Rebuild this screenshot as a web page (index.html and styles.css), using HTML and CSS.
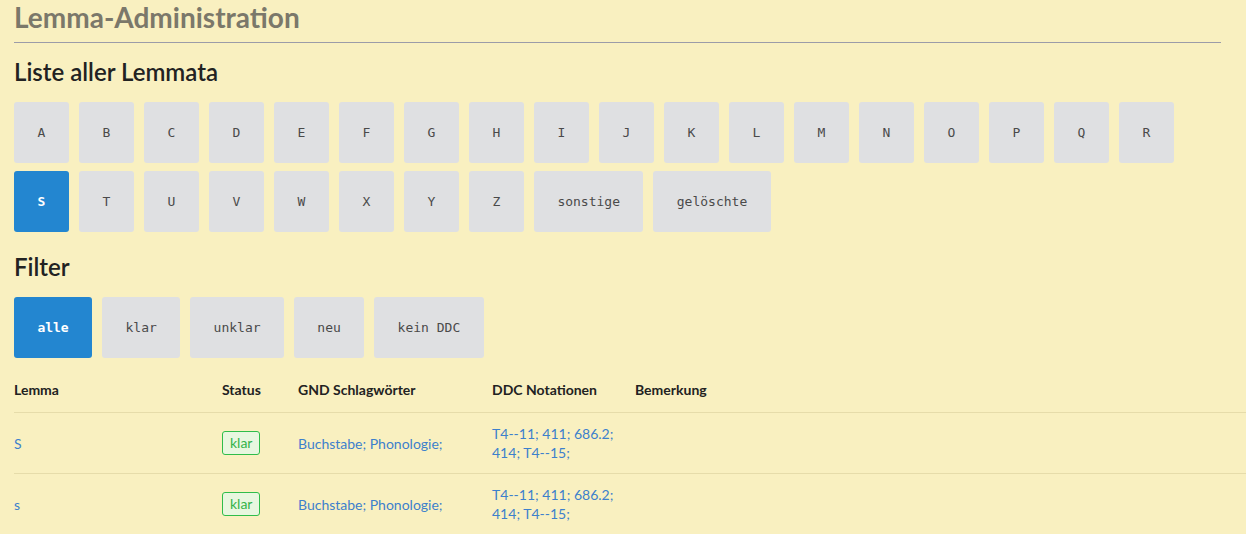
FILE: index.html
```html
<!DOCTYPE html>
<html lang="de">
<head>
<meta charset="utf-8">
<title>Lemma-Administration</title>
<link rel="stylesheet" href="styles.css">
</head>
<body>
<div class="page">
  <h1 class="title">Lemma-Administration</h1>
  <hr class="rule">
  <h2 class="section">Liste aller Lemmata</h2>
  <div class="btns letters">
    <a class="btn">A</a><a class="btn">B</a><a class="btn">C</a><a class="btn">D</a><a class="btn">E</a><a class="btn">F</a><a class="btn">G</a><a class="btn">H</a><a class="btn">I</a><a class="btn">J</a><a class="btn">K</a><a class="btn">L</a><a class="btn">M</a><a class="btn">N</a><a class="btn">O</a><a class="btn">P</a><a class="btn">Q</a><a class="btn">R</a><a class="btn active">S</a><a class="btn">T</a><a class="btn">U</a><a class="btn">V</a><a class="btn">W</a><a class="btn">X</a><a class="btn">Y</a><a class="btn">Z</a><a class="btn">sonstige</a><a class="btn">gelöschte</a>
  </div>
  <h2 class="section filter-head">Filter</h2>
  <div class="btns">
    <a class="btn active">alle</a><a class="btn">klar</a><a class="btn">unklar</a><a class="btn">neu</a><a class="btn">kein DDC</a>
  </div>
  <table class="lemmas">
    <thead>
      <tr>
        <th class="c-lemma">Lemma</th>
        <th class="c-status">Status</th>
        <th class="c-gnd">GND Schlagwörter</th>
        <th class="c-ddc">DDC Notationen</th>
        <th>Bemerkung</th>
      </tr>
    </thead>
    <tbody>
      <tr>
        <td class="blue"><a class="link">S</a></td>
        <td><span class="badge">klar</span></td>
        <td class="blue"><a class="link">Buchstabe</a>; <a class="link">Phonologie</a>;</td>
        <td class="blue ddc"><a class="link">T4--11</a>; <a class="link">411</a>; <a class="link">686.2</a>; <a class="link">414</a>; <a class="link">T4--15</a>;</td>
        <td></td>
      </tr>
      <tr>
        <td class="blue"><a class="link">s</a></td>
        <td><span class="badge">klar</span></td>
        <td class="blue"><a class="link">Buchstabe</a>; <a class="link">Phonologie</a>;</td>
        <td class="blue ddc"><a class="link">T4--11</a>; <a class="link">411</a>; <a class="link">686.2</a>; <a class="link">414</a>; <a class="link">T4--15</a>;</td>
        <td></td>
      </tr>
    </tbody>
  </table>
</div>
</body>
</html>
```

FILE: styles.css
```css
html, body {
  margin: 0;
  padding: 0;
  background: #f9f0c0;
}
body {
  font-family: Lato, "Liberation Sans", sans-serif;
  color: #222;
  overflow: hidden;
}
.page {
  padding: 0 25px 0 14px;
}
.title {
  margin: 0;
  padding-top: 1px;
  font-size: 28px;
  line-height: 33px;
  font-weight: 700;
  color: #7b786a;
}
.rule {
  margin: 8px 0 0;
  border: 0;
  border-top: 1px solid #9c9ca8;
  height: 0;
}
.section {
  margin: 15px 0 0;
  font-size: 24px;
  line-height: 28px;
  font-weight: 600;
  color: #222;
}
.filter-head {
  margin-top: 21px;
}
.btns {
  display: flex;
  flex-wrap: wrap;
  gap: 8px 10px;
  margin-top: 16px;
}
.btn {
  display: flex;
  align-items: center;
  justify-content: center;
  min-width: 55px;
  height: 61px;
  padding: 0 23.4px;
  box-sizing: border-box;
  background: #dfe0e2;
  border-radius: 3px;
  font-family: "DejaVu Sans Mono", "Liberation Mono", monospace;
  font-size: 13px;
  color: #4a4a4a;
  white-space: pre;
}
.btn.active {
  background: #2386d0;
  color: #fff;
  font-weight: 700;
}
.lemmas {
  margin-top: 10px;
  width: calc(100% + 25px);
  border-collapse: collapse;
  font-size: 14px;
}
.lemmas th {
  text-align: left;
  font-weight: 700;
  padding: 12px 0;
  line-height: 20px;
  border-bottom: 1px solid #e6dcaa;
}
.lemmas td {
  padding: 11px 0;
  line-height: 19px;
  vertical-align: middle;
  border-bottom: 1px solid #e6dcaa;
}
.c-lemma { width: 208px; }
.c-status { width: 76px; }
.c-gnd { width: 194px; }
.c-ddc { width: 143px; }
.ddc {
  padding-right: 14px !important;
}
.blue,
.link {
  color: #3d80cc;
}
.badge {
  display: inline-block;
  padding: 1px 7px;
  line-height: 20px;
  border: 1px solid #2fbd4a;
  border-radius: 3px;
  background: #e8f7df;
  color: #34b34a;
  font-size: 14px;
}
```
